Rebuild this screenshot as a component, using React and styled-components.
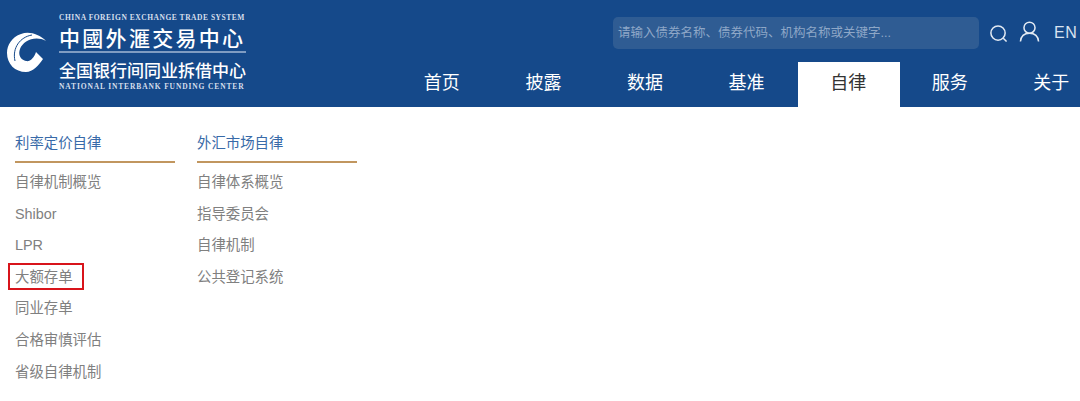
import React from 'react';
import styled, { createGlobalStyle } from 'styled-components';

const navItems = ['首页', '披露', '数据', '基准', '自律', '服务', '关于'];
const columns = [
  {
    title: '利率定价自律',
    links: ['自律机制概览', 'Shibor', 'LPR', '大额存单', '同业存单', '合格审慎评估', '省级自律机制'],
  },
  {
    title: '外汇市场自律',
    links: ['自律体系概览', '指导委员会', '自律机制', '公共登记系统'],
  },
];

const App = () => {
  return (
    <>
      <GlobalStyle />
      <HeaderStyle>
        <LogoStyle>
          <LogoMarkStyle viewBox="0 0 41 41">
            <path d="M39 9C32 2 22-1 14 2 5 5 0 13 0 21c0 11 8 19 19 19 7 0 13-7 17-13l-7-7c-2 6-6 10-10 9-6-1-8-7-6-12C16 9 28 3 39 9Z" fill="#fff" />
            <path d="M25 3C13 5 5 16 8 29" fill="none" stroke="#15498a" strokeWidth="1" />
          </LogoMarkStyle>
          <LogoTextStyle>
            <LogoEnglishStyle>CHINA FOREIGN EXCHANGE TRADE SYSTEM</LogoEnglishStyle>
            <LogoTitleStyle>中國外滙交易中心</LogoTitleStyle>
            <LogoSubtitleStyle>全国银行间同业拆借中心</LogoSubtitleStyle>
            <LogoEnglishStyle $wide>NATIONAL INTERBANK FUNDING CENTER</LogoEnglishStyle>
          </LogoTextStyle>
        </LogoStyle>
        <HeaderRightStyle>
          <TopBarStyle>
            <SearchBoxStyle>请输入债券名称、债券代码、机构名称或关键字...</SearchBoxStyle>
            <IconStyle viewBox="0 0 20 20">
              <circle cx="9.5" cy="9.5" r="7.5" />
              <path d="M15 15l3.5 3.5" />
            </IconStyle>
            <IconStyle viewBox="0 0 22 22" $wide>
              <circle cx="11" cy="7" r="5.8" />
              <path d="M1.5 21.5c.5-5.5 4-8.7 9.5-8.7s9 3.2 9.5 8.7" />
            </IconStyle>
            <LangStyle>EN</LangStyle>
          </TopBarStyle>
          <NavStyle>
            {navItems.map((item) => (
              <NavItemStyle key={item} $active={item === '自律'}>{item}</NavItemStyle>
            ))}
          </NavStyle>
        </HeaderRightStyle>
      </HeaderStyle>
      <MenuStyle>
        {columns.map((column) => (
          <ColumnStyle key={column.title}>
            <ColumnTitleStyle>{column.title}</ColumnTitleStyle>
            {column.links.map((link) => (
              <MenuLinkStyle key={link} $marked={link === '大额存单'}>{link}</MenuLinkStyle>
            ))}
          </ColumnStyle>
        ))}
      </MenuStyle>
    </>
  );
};

const GlobalStyle = createGlobalStyle`
  html, body {
    margin: 0;
    height: 401px;
    overflow: hidden;
    background: #fff;
    font-family: "Liberation Sans", "Noto Sans CJK SC", sans-serif;
  }
`;

const HeaderStyle = styled.header`
  display: flex;
  justify-content: space-between;
  height: 107px;
  width: 1080px;
  background: #15498a;
  overflow: hidden;
`;

const LogoStyle = styled.div`
  display: flex;
  align-items: flex-start;
  padding: 13px 0 0 7px;
  box-sizing: border-box;
  height: 100%;
`;

const LogoMarkStyle = styled.svg`
  width: 41px;
  height: 41px;
  margin: 19px 11px 0 0;
`;

const LogoTextStyle = styled.div`
  width: 187px;
  color: #fff;
`;

const LogoEnglishStyle = styled.div`
  font-family: "Liberation Serif", serif;
  font-size: 7.5px;
  font-weight: bold;
  line-height: 10px;
  white-space: nowrap;
  color: #d5dfec;
  letter-spacing: ${(props) => (props.$wide ? '0.87px' : '0.53px')};
`;

const LogoTitleStyle = styled.div`
  font-family: "Noto Sans CJK TC", sans-serif;
  font-size: 21px;
  font-weight: 500;
  line-height: 26px;
  height: 27px;
  letter-spacing: 2.3px;
  margin-top: 1px;
  border-bottom: 2px solid #7f9cc2;
  white-space: nowrap;
`;

const LogoSubtitleStyle = styled.div`
  font-family: "Noto Sans CJK SC", sans-serif;
  font-size: 17px;
  font-weight: 500;
  line-height: 24px;
  margin-top: 5px;
  white-space: nowrap;
`;

const HeaderRightStyle = styled.div`
  width: 688px;
  flex-shrink: 0;
  display: flex;
  flex-direction: column;
  justify-content: space-between;
`;

const TopBarStyle = styled.div`
  display: flex;
  align-items: center;
  height: 32px;
  margin-top: 17px;
  padding-left: 221px;
  color: #d9e3f0;
`;

const SearchBoxStyle = styled.div`
  width: 361px;
  height: 32px;
  padding-left: 5px;
  margin-right: 10px;
  line-height: 32px;
  font-size: 12.5px;
  border-radius: 5px;
  background: #2f5c93;
  color: #8ea7c7;
  white-space: nowrap;
  overflow: hidden;
`;

const IconStyle = styled.svg`
  margin-top: ${(props) => (props.$wide ? '-3px' : '1px')};
  margin-right: ${(props) => (props.$wide ? '14px' : '11px')};
  width: ${(props) => (props.$wide ? '21px' : '19px')};
  height: ${(props) => (props.$wide ? '21px' : '19px')};
  fill: none;
  stroke: #e3eaf3;
  stroke-width: 1.6;
`;

const LangStyle = styled.span`
  font-size: 16px;
  letter-spacing: 0.6px;
`;

const NavStyle = styled.nav`
  display: flex;
  height: 45px;
`;

const NavItemStyle = styled.div`
  flex: 0 0 101.6px;
  box-sizing: border-box;
  padding-right: 2px;
  text-align: center;
  font-size: 18px;
  line-height: 42px;
  color: ${(props) => (props.$active ? '#333' : '#fff')};
  background: ${(props) => (props.$active ? '#fff' : 'transparent')};
`;

const MenuStyle = styled.main`
  display: flex;
  gap: 22px;
  padding: 19px 0 0 15px;
`;

const ColumnStyle = styled.section`
  width: 160px;
`;

const ColumnTitleStyle = styled.div`
  height: 35px;
  line-height: 34px;
  font-size: 14.4px;
  color: #386aa8;
  border-bottom: 2px solid #c1965f;
  margin-bottom: 4px;
`;

const MenuLinkStyle = styled.div`
  position: relative;
  height: 31.6px;
  line-height: 31.6px;
  font-size: 14.4px;
  color: #808080;

  ${(props) => props.$marked && `
    &::after {
      content: "";
      position: absolute;
      left: -7px;
      top: 1px;
      width: 72px;
      height: 23px;
      border: 2px solid #d8141b;
    }
  `}
`;

export default App;
